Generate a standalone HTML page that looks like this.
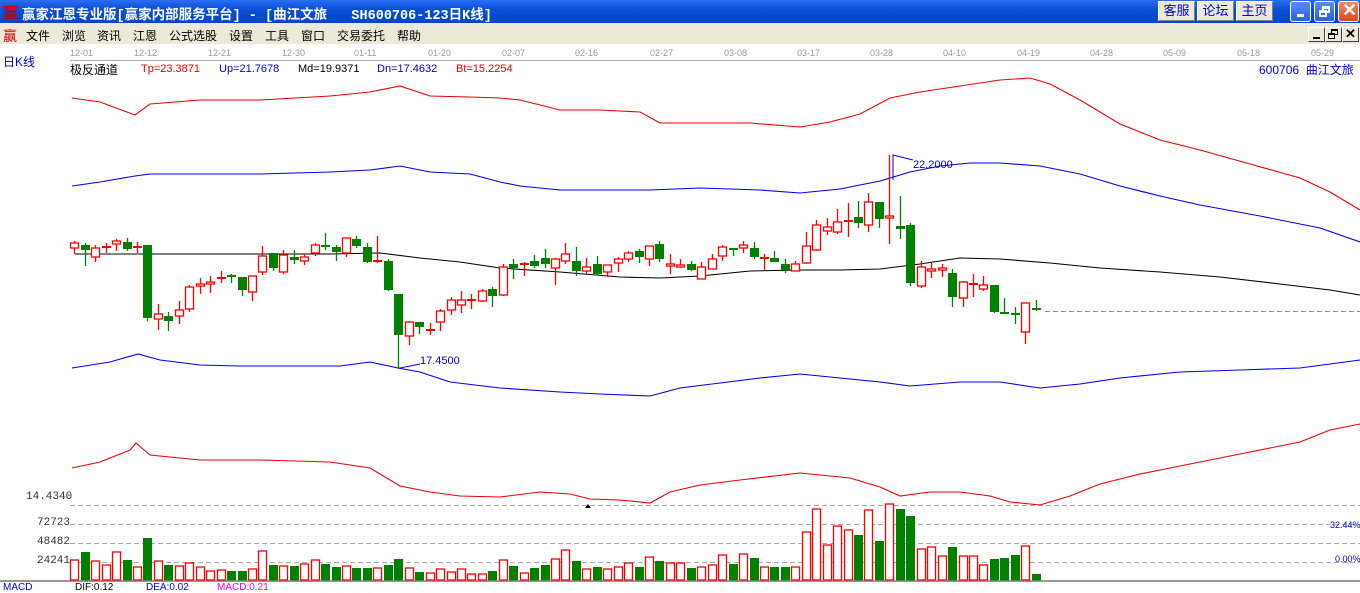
<!DOCTYPE html>
<html><head><meta charset="utf-8"><style>
*{margin:0;padding:0;box-sizing:border-box}
body{width:1360px;height:588px;overflow:hidden;background:#fff;font-family:"Liberation Sans","Noto Sans CJK SC",sans-serif;position:relative}
.t{position:absolute;white-space:nowrap}
#title{position:absolute;left:0;top:0;width:1360px;height:23px;background:linear-gradient(#2a6ef0,#0a4fd8 40%,#0646c8);}
#menu{position:absolute;left:0;top:23px;width:1360px;height:22px;background:#ece9d8;border-bottom:1px solid #fff}
.btn{position:absolute;top:1px;height:20px;width:37px;background:#ece9d8;border:1px solid #fff;border-right-color:#808080;border-bottom-color:#808080;color:#00c;font-size:13px;text-align:center;line-height:18px}
.wb{position:absolute;top:1px;width:21px;height:21px;border:1px solid #fff;border-radius:3px;background:linear-gradient(#5a8cf8,#2a5fe0)}
.sb{position:absolute;top:27px;width:17px;height:15px;background:#ece9d8;border:1px solid #fff;border-right-color:#404040;border-bottom-color:#404040}
</style></head><body>
<div id="title"></div>
<div class="t" style="left:3px;top:2px;font-size:15px;color:#c00;font-weight:bold">赢</div>
<div class="t" style="left:22px;top:3px;font-size:13.5px;color:#fff;font-weight:bold;font-family:'Liberation Mono','Noto Sans CJK SC',monospace">赢家江恩专业版[赢家内部服务平台] - [曲江文旅&nbsp;&nbsp;&nbsp;SH600706-123日K线]</div>
<div class="btn" style="left:1158px">客服</div>
<div class="btn" style="left:1197px">论坛</div>
<div class="btn" style="left:1236px">主页</div>
<div class="wb" style="left:1290px"><div style="position:absolute;left:6px;top:12px;width:7px;height:3px;background:#fff"></div></div>
<div class="wb" style="left:1314px"><div style="position:absolute;left:7px;top:4px;width:8px;height:7px;border:2px solid #fff;border-top-width:3px"></div><div style="position:absolute;left:4px;top:8px;width:8px;height:7px;border:2px solid #fff;border-top-width:3px;background:#3a6ee8"></div></div>
<div class="wb" style="left:1338px;background:linear-gradient(#f08a6a,#d84a20)"><div class="t" style="left:3px;top:-2px;color:#fff;font-size:18px;font-weight:bold">✕</div></div>
<div id="menu"></div>
<div class="t" style="left:3px;top:26px;font-size:14px;color:#c00">赢</div>
<div class="t" style="left:26px;top:27px;font-size:12px;color:#000;word-spacing:0">文件</div>
<div class="t" style="left:62px;top:27px;font-size:12px">浏览</div>
<div class="t" style="left:97px;top:27px;font-size:12px">资讯</div>
<div class="t" style="left:133px;top:27px;font-size:12px">江恩</div>
<div class="t" style="left:169px;top:27px;font-size:12px">公式选股</div>
<div class="t" style="left:229px;top:27px;font-size:12px">设置</div>
<div class="t" style="left:265px;top:27px;font-size:12px">工具</div>
<div class="t" style="left:301px;top:27px;font-size:12px">窗口</div>
<div class="t" style="left:337px;top:27px;font-size:12px">交易委托</div>
<div class="t" style="left:397px;top:27px;font-size:12px">帮助</div>
<div class="sb" style="left:1308px"><div style="position:absolute;left:4px;top:9px;width:7px;height:2px;background:#000"></div></div>
<div class="sb" style="left:1325px"><div style="position:absolute;left:5px;top:1px;width:7px;height:6px;border:1px solid #000;border-top-width:2px"></div><div style="position:absolute;left:2px;top:5px;width:7px;height:6px;border:1px solid #000;border-top-width:2px;background:#ece9d8"></div></div>
<div class="sb" style="left:1342px"><div class="t" style="left:2px;top:-2px;font-size:13px;font-weight:bold">✕</div></div>
<svg id="c" width="1360" height="588" style="position:absolute;left:0;top:0" xmlns="http://www.w3.org/2000/svg"></svg>
<div class="t" style="left:3px;top:53px;font-size:12px;color:#00c">日K线</div>
<div class="t" style="left:70px;top:61px;font-size:12px">极反通道</div>
<div class="t" style="left:141px;top:63px;font-size:11px;color:#e00">Tp=23.3871</div>
<div class="t" style="left:219px;top:63px;font-size:11px;color:#00c">Up=21.7678</div>
<div class="t" style="left:298px;top:63px;font-size:11px">Md=19.9371</div>
<div class="t" style="left:377px;top:63px;font-size:11px;color:#00c">Dn=17.4632</div>
<div class="t" style="left:456px;top:63px;font-size:11px;color:#e00">Bt=15.2254</div>
<div class="t" style="left:1259px;top:61px;font-size:12px;color:#00c">600706&nbsp;&nbsp;曲江文旅</div>
<div class="t" style="left:913px;top:159px;font-size:11px;color:#00c">22.2000</div>
<div class="t" style="left:420px;top:355px;font-size:11px;color:#00c">17.4500</div>
<div class="t" style="left:26px;top:491px;font-size:11px;color:#333;font-family:'Liberation Mono',monospace">14.4340</div>
<div class="t" style="left:37px;top:517px;font-size:11px;color:#333;font-family:'Liberation Mono',monospace">72723</div>
<div class="t" style="left:37px;top:536px;font-size:11px;color:#333;font-family:'Liberation Mono',monospace">48482</div>
<div class="t" style="left:37px;top:555px;font-size:11px;color:#333;font-family:'Liberation Mono',monospace">24241</div>
<div class="t" style="left:1330px;top:520px;font-size:9px;color:#00c">32.44%</div>
<div class="t" style="left:1335px;top:554px;font-size:9px;color:#00c">0.00%</div>
<div class="t" style="left:3px;top:582px;font-size:10px;color:#00c">MACD</div>
<div class="t" style="left:75px;top:582px;font-size:10px;color:#000">DIF:0.12</div>
<div class="t" style="left:146px;top:582px;font-size:10px;color:#00c">DEA:0.02</div>
<div class="t" style="left:217px;top:582px;font-size:10px;color:#e0e">MACD:0.21</div>
<script>
var s='';
function L(pts,c){s+='<polyline fill="none" stroke="'+c+'" stroke-width="1.1" points="'+pts.map(function(p){return p.join(',')}).join(' ')+'"/>';}
var dates=[['12-01',70],['12-12',134],['12-21',208],['12-30',282],['01-11',354],['01-20',428],['02-07',502],['02-16',575],['02-27',650],['03-08',724],['03-17',797],['03-28',870],['04-10',943],['04-19',1017],['04-28',1090],['05-09',1163],['05-18',1237],['05-29',1311]];
dates.forEach(function(d){s+='<text x="'+d[1]+'" y="56" font-size="9" fill="#999" font-family="Liberation Sans">'+d[0]+'</text>';});
s+='<line x1="70" y1="60.5" x2="1360" y2="60.5" stroke="#aaa"/>';
[505,524,543,562].forEach(function(y){s+='<line x1="70" y1="'+(y+.5)+'" x2="1360" y2="'+(y+.5)+'" stroke="#aaa" stroke-dasharray="5,3"/>';});
s+='<line x1="0" y1="581" x2="1360" y2="581" stroke="#999" stroke-width="2"/>';
s+='<polygon points="585,508 591,508 588,504" fill="#000"/>';
L([[72,98],[100,102],[135,115],[150,104],[200,100],[260,100],[330,96],[370,92],[400,86],[430,96],[470,97],[500,98],[520,100],[560,110],[600,110],[640,112],[660,123],[700,123],[750,123],[800,127],[830,122],[860,114],[890,98],[920,92],[960,86],[1000,80],[1030,78],[1050,84],[1080,100],[1120,124],[1160,140],[1200,150],[1250,164],[1300,178],[1330,192],[1360,210]],'#e00');
L([[72,186],[100,182],[135,176],[150,174],[200,174],[260,174],[330,172],[370,170],[400,166],[430,172],[470,174],[500,182],[520,186],[560,190],[600,190],[650,190],[700,188],[760,190],[800,193],[840,189],[880,181],[910,172],[940,166],[970,163],[1000,163],[1040,166],[1080,174],[1120,186],[1160,196],[1200,205],[1260,216],[1320,228],[1360,242]],'#00e');
L([[75,254],[130,254],[180,254],[260,254],[330,254],[380,253],[420,258],[460,262],[500,268],[560,272],[620,277],[660,278],[700,276],[750,271],[800,270],[840,270],[880,269],[920,264],[960,258],[1000,259],[1050,263],[1100,268],[1160,272],[1220,277],[1280,284],[1330,290],[1360,295]],'#000');
L([[72,368],[110,362],[138,354],[160,360],[200,365],[240,366],[300,366],[340,366],[370,362],[398,368],[420,372],[450,382],[500,388],[560,392],[600,394],[650,396],[680,388],[720,383],[760,378],[800,374],[840,378],[880,382],[910,386],[960,382],[1000,382],[1040,388],[1080,384],[1120,378],[1180,372],[1240,370],[1300,368],[1330,364],[1360,360]],'#00e');
L([[72,468],[100,462],[130,450],[136,443],[150,455],[200,460],[260,460],[330,462],[370,468],[400,486],[430,492],[460,496],[500,497],[540,492],[570,494],[590,499],[620,500],[650,503],[670,492],[700,485],[740,480],[800,473],[850,478],[880,487],[900,496],[930,492],[960,492],[990,496],[1010,502],[1040,505],[1070,496],[1100,484],[1140,474],[1180,466],[1240,454],[1300,442],[1330,430],[1360,424]],'#e00');
s+='<polyline fill="none" stroke="#00e" points="893,180 893,155 913,160"/>';
s+='<polyline fill="none" stroke="#00e" points="400,369 400,368 420,364"/>';
s+='<line x1="1045" y1="311.5" x2="1360" y2="311.5" stroke="#888" stroke-dasharray="5,3"/>';
var C=[
'R243,248,241,254','G245,250,243,266','R248,257,245,262','R247,248,243,253','R241,244,239,251','G242,249,238,251','R247,248,242,253','G245,318,245,321','R314,319,304,330','G316,321,312,331',
'R310,316,301,324','R287,309,285,312','R284,286,278,294','R282,284,276,293','R278,279,271,283','G275,276,274,283','G277,290,277,296','R276,292,276,301','R256,272,246,275','G253,268,253,271',
'R255,272,250,274','G257,260,250,264','R257,261,254,265','R245,253,243,256','G245,247,233,250','G247,252,245,261','R238,253,238,257','G239,246,236,248','G247,262,243,263','R261,262,236,263',
'G261,290,259,291','G294,335,294,369','R322,336,321,345','G322,327,322,334','R330,331,323,335','R311,322,309,331','R300,310,297,315','R300,305,291,313','R300,301,294,309','R291,301,289,302',
'G289,296,287,307','R267,295,264,296','G264,268,259,279','R264,264,262,276','G261,266,255,268','G258,264,249,268','R259,268,258,285','R254,261,243,264','G261,271,247,276','R267,271,258,274',
'G264,274,256,275','R265,272,265,277','R259,263,257,272','R253,259,251,262','G251,257,249,263','R246,259,246,266','G244,259,241,262','R264,266,254,274','R265,267,259,268','G264,270,261,271',
'R267,279,262,279','R259,269,254,269','R247,256,245,261','G248,248,248,256','R245,248,241,253','G248,257,242,259','R258,259,254,270','G258,262,251,262','G264,270,259,273','R264,271,261,271',
'R246,263,232,264','R225,250,220,251','R227,231,218,235','R222,232,209,234','R221,222,203,237','G217,223,201,228','R202,225,193,232','G202,219,202,228','R216,218,155,244','G226,229,196,239',
'G225,283,223,286','R267,286,261,288','R269,271,263,278','R268,270,264,277','G273,297,269,307','R282,298,281,307','R284,285,274,297','R285,289,276,291','G285,312,285,313','G312,313,298,313',
'G313,313,307,324','R303,332,303,344','G308,310,300,311'];
var V=[560,552,561,565,552,560,567,538,561,565,566,563,567,571,570,571,571,569,551,565,566,566,564,560,564,567,566,568,568,568,565,559,568,572,573,569,572,569,574,574,571,560,566,573,568,565,559,550,561,569,567,569,567,563,567,557,561,563,563,568,567,565,555,564,554,558,567,567,567,567,532,509,545,526,530,535,510,541,504,509,516,549,547,556,547,556,556,565,559,558,555,546,574];
C.forEach(function(c,i){
 var t=c[0],a=c.slice(1).split(',').map(Number),x=Math.round(74.3+i*10.45)+.5;
 var col=t=='R'?'#f00':'#008000';
 var top=a[0],bot=a[1],hi=a[2],lo=a[3];
 s+='<line x1="'+x+'" y1="'+hi+'" x2="'+x+'" y2="'+lo+'" stroke="'+col+'" stroke-width="1.3"/>';
 var h=Math.max(bot-top,1);
 if(t=='R'){ if(h<=1) s+='<line x1="'+(x-4.5)+'" y1="'+top+'" x2="'+(x+4.5)+'" y2="'+top+'" stroke="#f00" stroke-width="2"/>'; else s+='<rect x="'+(x-4)+'" y="'+top+'" width="8" height="'+h+'" fill="#fff" stroke="#f00" stroke-width="1.3"/>';}
 else s+='<rect x="'+(x-4.5)+'" y="'+top+'" width="9" height="'+Math.max(h,2)+'" fill="#008000"/>';
 var vt=V[i],vb=580;
 if(t=='R') s+='<rect x="'+(x-4)+'" y="'+vt+'" width="8" height="'+(vb-vt)+'" fill="#fff" stroke="#f00" stroke-width="1.3"/>';
 else s+='<rect x="'+(x-4.5)+'" y="'+vt+'" width="9" height="'+(vb-vt+.5)+'" fill="#008000"/>';
});
document.getElementById('c').innerHTML=s;
</script>
</body></html>
